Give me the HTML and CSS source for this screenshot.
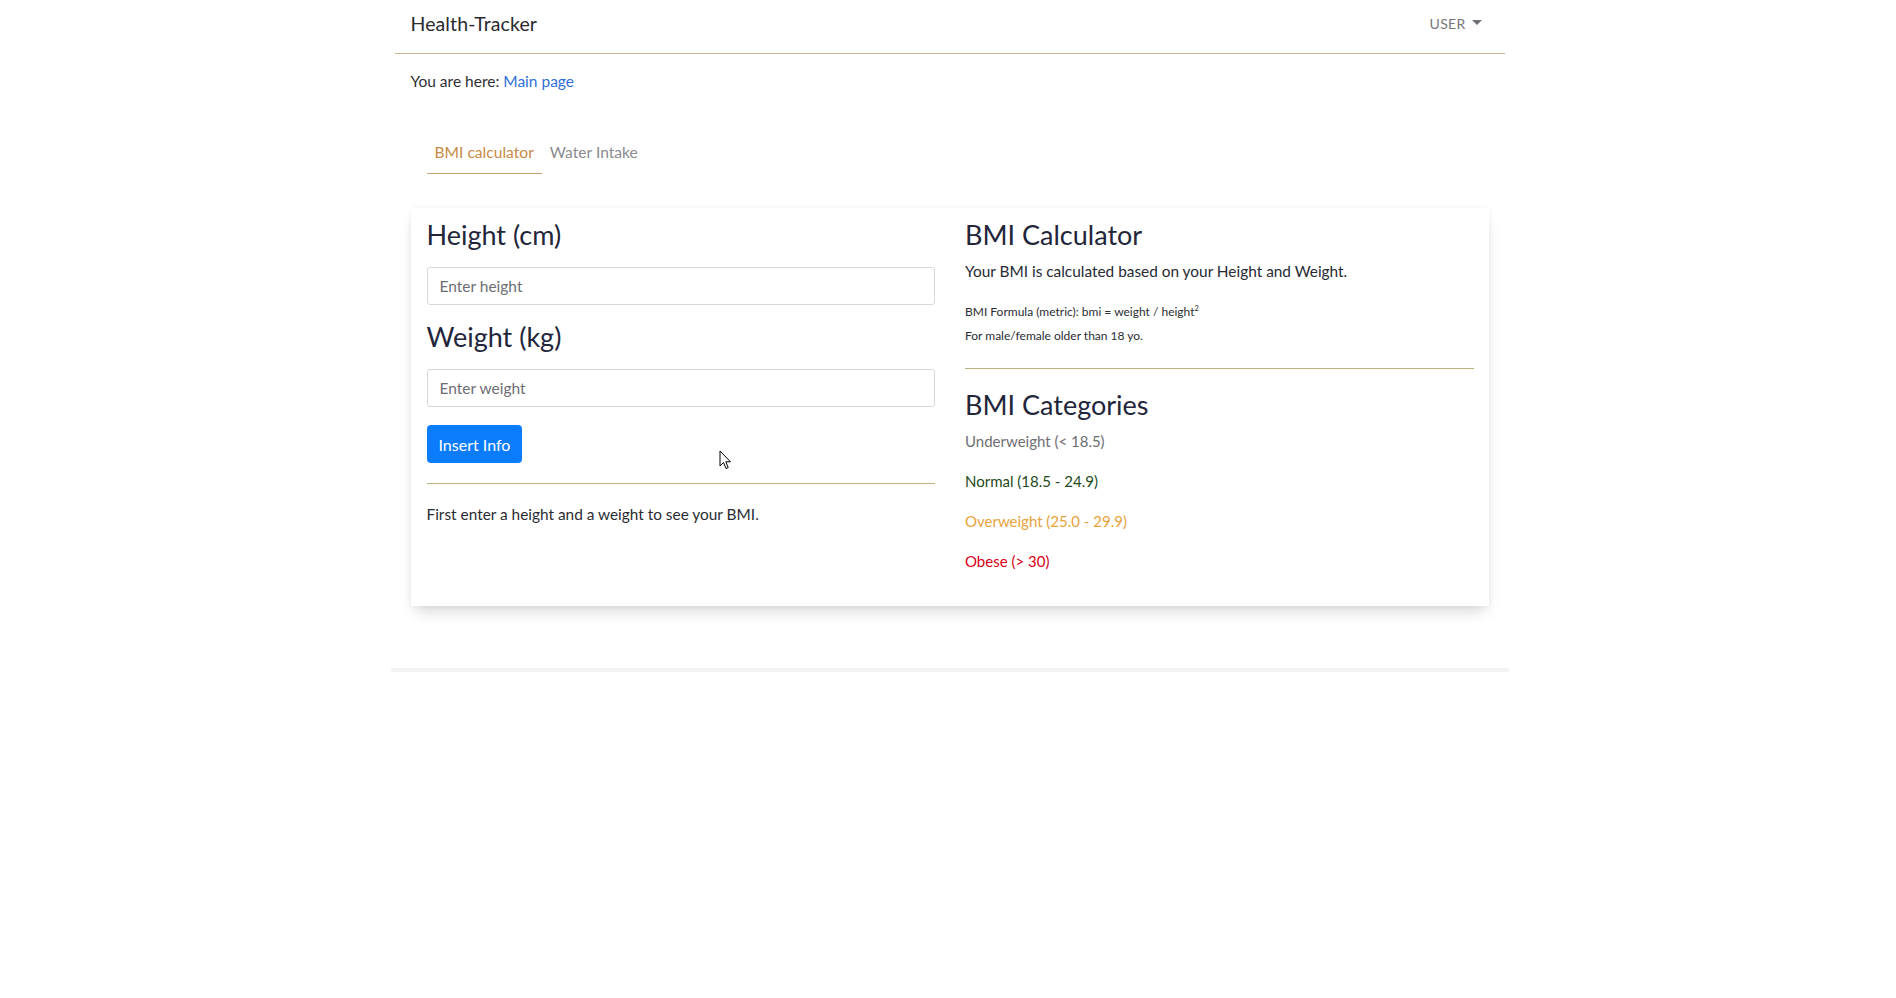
FILE: index.html
```html
<!DOCTYPE html>
<html lang="en">
<head>
<meta charset="utf-8">
<title>Health-Tracker</title>
<link rel="stylesheet" href="styles.css">
</head>
<body>
<header class="navbar">
  <a class="brand" href="#">Health-Tracker</a>
  <div class="user-menu">USER <span class="caret"></span></div>
</header>
<main class="main">
  <p class="breadcrumb">You are here: <a href="#">Main page</a></p>
  <nav class="tabs">
    <a class="tab active" href="#">BMI calculator</a>
    <a class="tab" href="#">Water Intake</a>
  </nav>
  <section class="card">
    <div class="col">
      <h3 class="heading">Height (cm)</h3>
      <input class="field" type="text" placeholder="Enter height">
      <h3 class="heading">Weight (kg)</h3>
      <input class="field" type="text" placeholder="Enter weight">
      <button class="btn">Insert Info</button>
      <hr class="rule rule-left">
      <p class="result">First enter a height and a weight to see your BMI.</p>
    </div>
    <div class="col">
      <h3 class="heading">BMI Calculator</h3>
      <p class="lead">Your BMI is calculated based on your Height and Weight.</p>
      <p class="small first">BMI Formula (metric): bmi = weight / height<sup>2</sup></p>
      <p class="small">For male/female older than 18 yo.</p>
      <hr class="rule rule-right">
      <h3 class="heading">BMI Categories</h3>
      <p class="cat under">Underweight (&lt; 18.5)</p>
      <p class="cat normal">Normal (18.5 - 24.9)</p>
      <p class="cat over">Overweight (25.0 - 29.9)</p>
      <p class="cat obese">Obese (&gt; 30)</p>
    </div>
  </section>
</main>
<footer class="footer"></footer>
<svg class="cursor" width="14" height="21" viewBox="0 0 14 21"><path d="M1 1 L1 16 L4.5 12.5 L7 18.5 L9.2 17.6 L6.8 11.8 L11.5 11.8 Z" fill="#fff" stroke="#000" stroke-width="1" stroke-linejoin="round"/></svg>
</body>
</html>
```
FILE: styles.css
```css
* { box-sizing: border-box; }
html, body { margin: 0; padding: 0; background: #fff; }
body {
  font-family: Lato, "Noto Sans", sans-serif;
  font-size: 15.4px;
  line-height: 22px;
  color: #272a33;
  position: relative;
  min-height: 998px;
  padding-left: 3px;
}
a { text-decoration: none; }

.navbar {
  width: 1110px;
  margin: 0 auto;
  height: 54px;
  display: flex;
  align-items: center;
  justify-content: space-between;
  padding: 0 23px 6px 16px;
  border-bottom: 1px solid #cdb590;
}
.brand { font-size: 19.5px; color: #2a2a2f; letter-spacing: 0.1px; }
.user-menu { font-size: 14px; color: #76767c; display: flex; align-items: center; gap: 6px; letter-spacing: 0.3px; }
.caret {
  width: 0; height: 0;
  border-left: 5px solid transparent;
  border-right: 5px solid transparent;
  border-top: 5px solid #6f6f75;
  margin-top: -2px;
}

.main { width: 1110px; margin: 0 auto; padding: 0 16px; }
.breadcrumb { margin: 16px 0 0; color: #2f2f35; font-size: 15.5px; }
.breadcrumb a { color: #2f6fd6; }

.tabs { display: flex; margin: 39px 0 0 16px; }
.tab { padding: 10px 8px 10px; color: #8b8b90; border-bottom: 1px solid transparent; font-size: 15.6px; }
.tab.active { color: #c88a45; border-bottom-color: #c9a46e; }

.card {
  margin-top: 34px;
  background: #fff;
  display: grid;
  grid-template-columns: 1fr 1fr;
  column-gap: 30px;
  padding: 11px 15px 34px 16px;
  box-shadow: 0 9px 14px -4px rgba(0,0,0,0.16), 0 0 6px rgba(0,0,0,0.05);
}
.col { display: flex; flex-direction: column; align-items: flex-start; }
.heading { margin: 0; font-size: 27px; line-height: 32px; font-weight: 400; color: #23263a; }
.field {
  width: 100%;
  height: 38px;
  margin: 16px 0;
  padding: 0 12px;
  border: 1px solid #d6d8db;
  border-radius: 3px;
  font-family: inherit;
  font-size: 15.5px;
  color: #495057;
}
.field::placeholder { color: #6d6e74; }
.btn {
  margin-top: 2px;
  height: 38px;
  padding: 0 12px;
  background: #0a7cfc;
  color: #fff;
  border: none;
  border-radius: 4px;
  font-family: inherit;
  font-size: 16px;
}
.rule { width: 100%; margin: 0; border: 0; border-top: 1px solid #b9b27c; }
.rule-left { margin-top: 20px; }
.result { margin: 19px 0 0; color: #2b2d33; }

.lead { margin: 9px 0 0; }
.small { margin: 8px 0 0; font-size: 12px; line-height: 16px; color: #2b2d33; }
.small.first { margin-top: 22px; }
.small sup { font-size: 7.5px; line-height: 0; }
.rule-right { margin-top: 24px; margin-bottom: 20px; }
.cat { margin: 0 0 18px; font-size: 15px; }
.heading + .cat { margin-top: 9px; }
.cat:last-child { margin-bottom: 0; }
.under { color: #6e6e72; }
.normal { color: #1e4a22; }
.over { color: #e9a23c; }
.obese { color: #d90018; }

.footer {
  width: 1118px;
  margin: 62px auto 0;
  height: 4px;
  background: #f5f3f6;
}
.cursor { position: absolute; left: 719px; top: 450px; }
```
